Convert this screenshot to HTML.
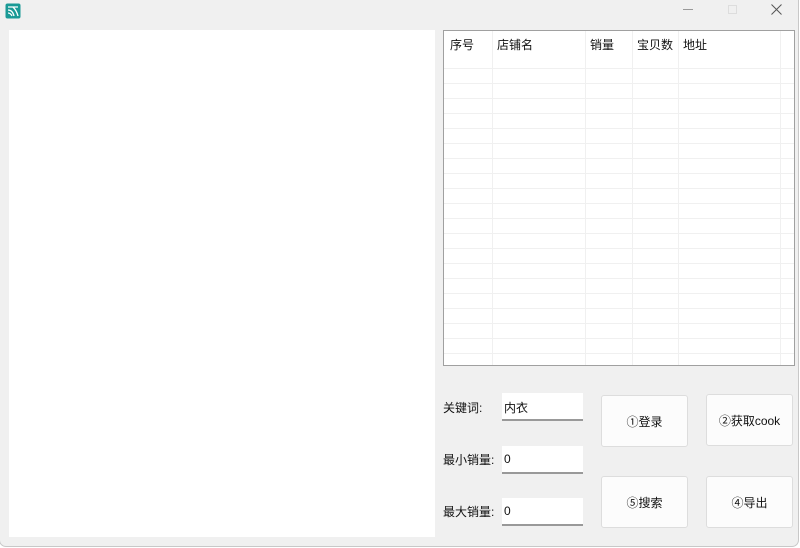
<!DOCTYPE html>
<html><head><meta charset="utf-8"><style>
*{margin:0;padding:0;box-sizing:border-box}
body{width:800px;height:548px;background:#fff;font-family:"Liberation Sans","Noto Sans CJK SC",sans-serif;font-size:12px;color:#111;position:relative;overflow:hidden}
.win{position:absolute;left:0;top:0;width:798px;height:546px;background:#f0f0f0;box-shadow:0 0 0 1px #c8c8c8;border-radius:0 0 6px 6px}
.a{position:absolute}
.panel{left:9px;top:30px;width:426px;height:507px;background:#fff}
.tbl{left:443px;top:30px;width:352px;height:336px;background:#fff;border:1px solid #a0a0a0;
background-image:repeating-linear-gradient(to bottom,transparent 0,transparent 14px,#f0f0f0 14px,#f0f0f0 15px);background-position:0 23px}
.hd{position:absolute;top:0;left:0;width:100%;height:37px;background:#fff}
.vl{position:absolute;top:0;bottom:0;width:1px;background:#f0f0f0}
.inp{background:#fff;border-bottom:2px solid #999;height:28px;width:81px;padding:6px 0 0 2px}
.btn{background:#fcfcfc;border:1px solid #ddd;border-radius:3px;width:87px;height:52px;display:flex;align-items:center;justify-content:center}
</style></head><body>
<div class="win">
<svg class="a" style="left:5px;top:3px" width="16" height="16" viewBox="0 0 16 16"><rect x="0.5" y="0.5" width="15" height="15" rx="2" fill="#1a9a96"/><path d="M3 4h10M3 7c3 0 5 2 6 6M3 10c2 0 3 1 4 3M8 4c2 2 4 5 5 9" stroke="#fff" stroke-width="1.3" fill="none"/></svg>
<div class="a" style="left:683px;top:9px;width:10px;height:1px;background:#999"></div>
<div class="a" style="left:728px;top:5px;width:9px;height:9px;border:1px solid #ddd"></div>
<svg class="a" style="left:771px;top:4px" width="11" height="11"><path d="M0.5 0.5L10.5 10.5M10.5 0.5L0.5 10.5" stroke="#555" stroke-width="1"/></svg>
<div class="a panel"></div>
<div class="a tbl">
<div class="vl" style="left:48px"></div><div class="vl" style="left:141px"></div><div class="vl" style="left:188px"></div><div class="vl" style="left:234px"></div><div class="vl" style="left:336px"></div>
<div class="hd">
<span class="a" style="left:6px;top:5px">序号</span><span class="a" style="left:53px;top:5px">店铺名</span><span class="a" style="left:146px;top:5px">销量</span><span class="a" style="left:193px;top:5px">宝贝数</span><span class="a" style="left:239px;top:5px">地址</span>
<div class="vl" style="left:48px"></div><div class="vl" style="left:141px"></div><div class="vl" style="left:188px"></div><div class="vl" style="left:234px"></div><div class="vl" style="left:336px"></div>
</div></div>
<span class="a" style="left:443px;top:399px">关键词:</span>
<span class="a" style="left:443px;top:451px">最小销量:</span>
<span class="a" style="left:443px;top:503px">最大销量:</span>
<div class="a inp" style="left:502px;top:393px">内衣</div>
<div class="a inp" style="left:502px;top:446px">0</div>
<div class="a inp" style="left:502px;top:498px">0</div>
<div class="a btn" style="left:601px;top:395px">①登录</div>
<div class="a btn" style="left:706px;top:394px">②获取cook</div>
<div class="a btn" style="left:601px;top:476px">⑤搜索</div>
<div class="a btn" style="left:706px;top:476px">④导出</div>
</div>
</body></html>
